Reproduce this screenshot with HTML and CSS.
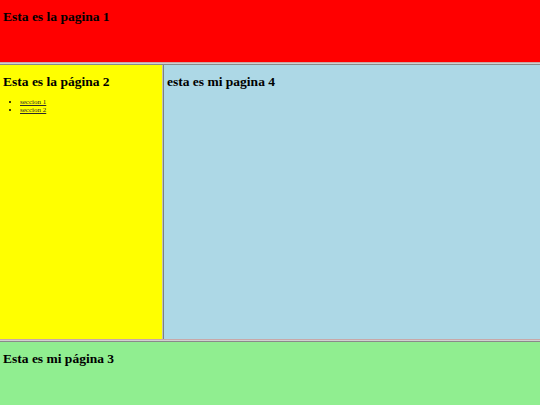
FILE: index.html
```
<!DOCTYPE html>
<html lang="es">
<head>
<meta charset="utf-8">
<title>Frames</title>
<link rel="stylesheet" href="styles.css">
</head>
<body>
<div class="frameset">
  <section class="frame frame-top">
    <h2 class="title">Esta es la pagina 1</h2>
  </section>
  <div class="hborder"></div>
  <div class="middle">
    <section class="frame frame-left">
      <h2 class="title">Esta es la página 2</h2>
      <ul class="links">
        <li><a href="#s1">seccion 1</a></li>
        <li><a href="#s2">seccion 2</a></li>
      </ul>
    </section>
    <div class="vborder"></div>
    <section class="frame frame-right">
      <h2 class="title">esta es mi pagina 4</h2>
    </section>
  </div>
  <div class="hborder"></div>
  <section class="frame frame-bottom">
    <h2 class="title">Esta es mi página 3</h2>
  </section>
</div>
</body>
</html>
```
FILE: styles.css
```
html, body {
  margin: 0;
  padding: 0;
}
body {
  width: 540px;
  height: 405px;
  overflow: hidden;
  font-family: "Liberation Serif", "Times New Roman", serif;
  color: #000;
}
.frameset {
  display: grid;
  grid-template-rows: 62px 3px 274px 3px 63px;
  height: 405px;
}
.frame {
  padding: 9px 3px 0 3px;
  overflow: hidden;
  box-sizing: border-box;
}
.frame-top { background: #ff0000; }
.frame-left { background: #ffff00; }
.frame-right { background: #add8e6; padding-left: 3px; }
.frame-bottom { background: #90ee90; }
.hborder {
  background: #d0d0d0;
  border-top: 1px solid #c8a8a8;
  border-bottom: 1px solid #8a8a8a;
  height: 1px;
}
.middle {
  display: grid;
  grid-template-columns: 162px 2px 1fr;
}
.vborder {
  background: #c4c4b4;
  border-right: 1px solid #808080;
}
.title {
  margin: 0;
  font-size: 13.5px;
  line-height: 15px;
  font-weight: bold;
}
.links {
  margin: 10px 0 0 0;
  padding-left: 17px;
  font-size: 7px;
  line-height: 7.5px;
}
.links a {
  color: #2a2a2a;
  text-decoration: underline;
}
```
